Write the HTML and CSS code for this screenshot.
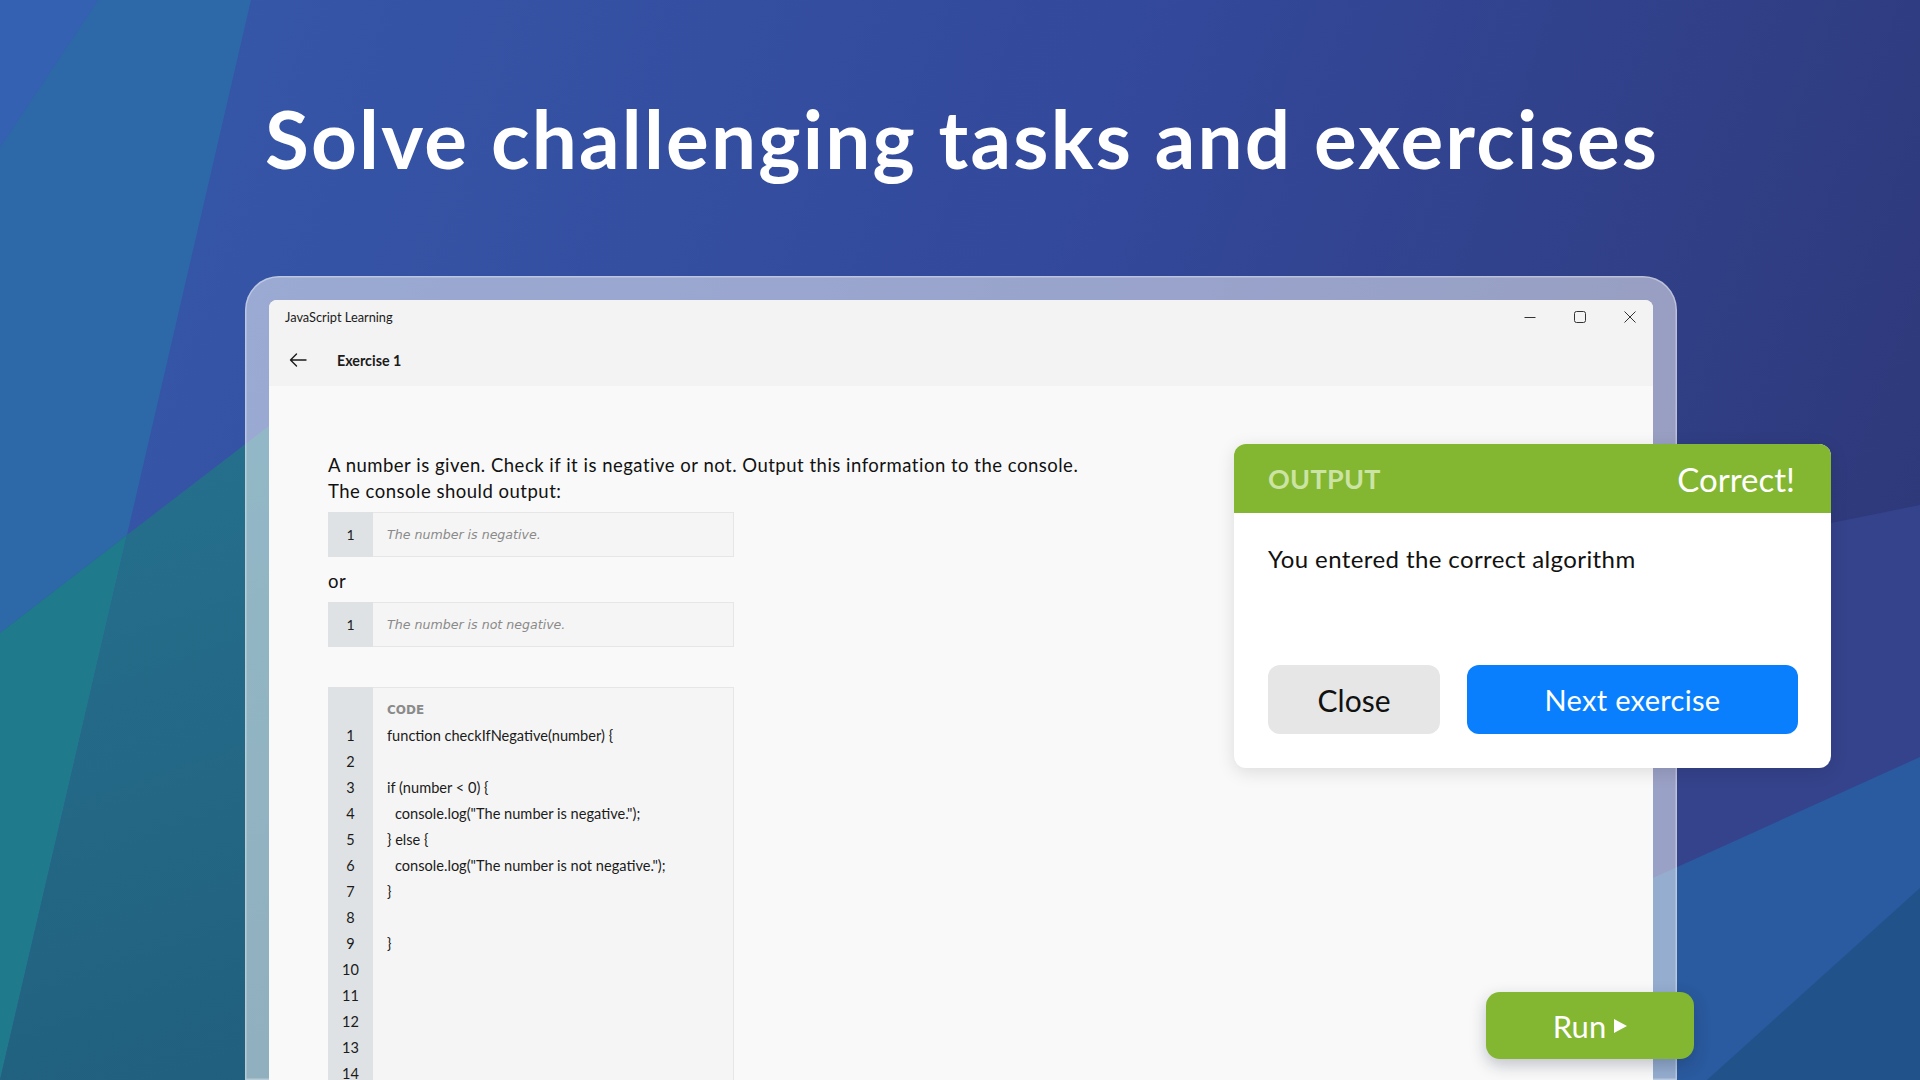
FILE: index.html
```html
<!DOCTYPE html>
<html lang="en">
<head>
<meta charset="utf-8">
<title>JavaScript Learning</title>
<link rel="stylesheet" href="styles.css">
</head>
<body>
<svg class="bg" viewBox="0 0 1920 1080" preserveAspectRatio="none" aria-hidden="true">
  <defs>
    <linearGradient id="base" x1="0" y1="0" x2="1920" y2="700" gradientUnits="userSpaceOnUse">
      <stop offset="0" stop-color="#3659aa"/>
      <stop offset="0.55" stop-color="#33489a"/>
      <stop offset="1" stop-color="#2e3878"/>
    </linearGradient>
    <linearGradient id="tealdark" x1="100" y1="500" x2="300" y2="1080" gradientUnits="userSpaceOnUse">
      <stop offset="0" stop-color="#256f8c"/>
      <stop offset="1" stop-color="#215f7e"/>
    </linearGradient>
  </defs>
  <rect x="0" y="0" width="1920" height="1080" fill="url(#base)"/>
  <polygon points="0,0 98,0 0,147" fill="#3461b1"/>
  <polygon points="98,0 251,0 127,535 0,633 0,147" fill="#2d69a8"/>
  <polygon points="0,633 127,535 0,1080" fill="#1f7b8b"/>
  <polygon points="127,535 420,310 420,1080 0,1080" fill="url(#tealdark)"/>
  <polygon points="1500,590 1920,505 1920,1080 1500,1080" fill="#35438c"/>
  <polygon points="1560,920 1920,757 1920,1080 1560,1080" fill="#2a5a9f"/>
  <polygon points="1707,1080 1920,888 1920,1080" fill="#21538a"/>
</svg>

<h1 class="headline">Solve challenging tasks and exercises</h1>

<div class="frame">
  <div class="window">
    <div class="titlebar">
      <div class="caption">
        <span class="app-title">JavaScript Learning</span>
        <div class="controls">
          <span class="ctl"><svg width="12" height="12" viewBox="0 0 12 12"><path d="M0.5 6.5H11.5" stroke="#333" stroke-width="1"/></svg></span>
          <span class="ctl"><svg width="12" height="12" viewBox="0 0 12 12"><rect x="0.5" y="0.5" width="11" height="11" rx="2" fill="none" stroke="#333" stroke-width="1"/></svg></span>
          <span class="ctl"><svg width="12" height="12" viewBox="0 0 12 12"><path d="M0.5 0.5L11.5 11.5M11.5 0.5L0.5 11.5" stroke="#333" stroke-width="1"/></svg></span>
        </div>
      </div>
      <div class="navbar">
        <svg class="back" width="18" height="14" viewBox="0 0 18 14"><path d="M17 7H1.5M7.5 1L1.5 7L7.5 13" fill="none" stroke="#1b1b1b" stroke-width="1.4" stroke-linecap="round" stroke-linejoin="round"/></svg>
        <span class="page-title">Exercise 1</span>
      </div>
    </div>

    <div class="content">
      <p class="task">A number is given. Check if it is negative or not. Output this information to the console.<br>The console should output:</p>
      <div class="snippet">
        <div class="gutter">1</div>
        <div class="snip-text">The number is negative.</div>
      </div>
      <p class="or">or</p>
      <div class="snippet">
        <div class="gutter">1</div>
        <div class="snip-text">The number is not negative.</div>
      </div>

      <div class="code">
        <div class="code-gutter">
          <span>&nbsp;</span><span>1</span><span>2</span><span>3</span><span>4</span><span>5</span><span>6</span><span>7</span><span>8</span><span>9</span><span>10</span><span>11</span><span>12</span><span>13</span><span>14</span>
        </div>
        <div class="code-lines">
          <span class="code-label">CODE</span>
          <span>function checkIfNegative(number) {</span>
          <span>&nbsp;</span>
          <span>if (number &lt; 0) {</span>
          <span class="ind">console.log("The number is negative.");</span>
          <span>} else {</span>
          <span class="ind">console.log("The number is not negative.");</span>
          <span>}</span>
          <span>&nbsp;</span>
          <span>}</span>
        </div>
      </div>
    </div>
  </div>
</div>

<div class="dialog">
  <div class="dialog-head">
    <span class="dh-label">OUTPUT</span>
    <span class="dh-status">Correct!</span>
  </div>
  <div class="dialog-body">
    <p class="dialog-msg">You entered the correct algorithm</p>
    <div class="dialog-actions">
      <button class="btn btn-close">Close</button>
      <button class="btn btn-next">Next exercise</button>
    </div>
  </div>
</div>

<button class="run">Run <span class="tri"></span></button>
</body>
</html>
```

FILE: styles.css
```css
* { box-sizing: border-box; }

html, body {
  margin: 0;
  padding: 0;
}

body {
  width: 1920px;
  height: 1080px;
  overflow: hidden;
  position: relative;
  font-family: Lato, "Liberation Sans", sans-serif;
  color: #1b1b1b;
}

.bg {
  position: absolute;
  left: 0;
  top: 0;
  width: 1920px;
  height: 1080px;
  z-index: -1;
}

.headline {
  margin: 0;
  padding: 90px 0 0 265px;
  height: 276px;
  font-family: Lato, "Liberation Sans", sans-serif;
  font-weight: 700;
  font-size: 80px;
  line-height: 96px;
  color: #ffffff;
  letter-spacing: 2.2px;
}

.frame {
  margin-left: 245px;
  width: 1432px;
  height: 804px;
  padding: 24px 24px 0 24px;
  border-radius: 34px 34px 0 0;
  background: rgba(255, 255, 255, 0.5);
  box-shadow: inset 0 0 0 1.5px rgba(255, 255, 255, 0.35);
}

.window {
  height: 100%;
  background: #f9f9f9;
  border-radius: 8px 8px 0 0;
  overflow: hidden;
}

.titlebar {
  background: #f3f3f3;
  height: 86px;
}

.caption {
  height: 34px;
  display: flex;
  align-items: center;
  justify-content: space-between;
  padding-left: 16px;
}

.app-title {
  font-family: Lato, "Liberation Sans", sans-serif;
  font-size: 12.8px;
  color: #1b1b1b;
}

.controls {
  display: flex;
  height: 34px;
  margin-right: -2px;
}

.ctl {
  width: 50px;
  display: flex;
  align-items: center;
  justify-content: center;
}

.navbar {
  height: 52px;
  display: flex;
  align-items: center;
  padding-left: 20px;
}

.back {
  display: block;
}

.page-title {
  margin-left: 30px;
  font-size: 14.3px;
  font-weight: 700;
  color: #1b1b1b;
}

.content {
  padding: 66px 0 0 59px;
}

.task {
  margin: 0;
  font-size: 18.5px;
  line-height: 26px;
  letter-spacing: 0.5px;
  color: #111;
}

.snippet {
  margin-top: 8px;
  width: 406px;
  height: 45px;
  display: flex;
  border: 1px solid #e6e6e6;
  background: #f5f5f5;
}

.gutter {
  width: 45px;
  background: #dfe2e4;
  display: flex;
  align-items: center;
  justify-content: center;
  font-size: 14px;
  color: #222;
  margin: -1px 0 -1px -1px;
}

.snip-text {
  display: flex;
  align-items: center;
  padding-left: 14px;
  font-family: "DejaVu Sans", sans-serif;
  font-style: italic;
  font-size: 12.6px;
  color: #8a8a8a;
}

.or {
  margin: 11px 0 0 0;
  font-size: 18.5px;
  line-height: 26px;
  letter-spacing: 0.5px;
  color: #111;
}

.code {
  margin-top: 40px;
  width: 406px;
  display: flex;
  border: 1px solid #e6e6e6;
  background: #f5f5f5;
}

.code-gutter {
  width: 45px;
  margin: -1px 0 0 -1px;
  background: #dfe2e4;
  padding-top: 10px;
  display: flex;
  flex-direction: column;
  align-items: center;
}

.code-gutter span,
.code-lines span {
  display: block;
  height: 26px;
  line-height: 26px;
  font-size: 14.6px;
  color: #1b1b1b;
}

.code-gutter span {
  font-size: 14.5px;
}

.code-lines {
  padding: 9px 0 0 14px;
  display: flex;
  flex-direction: column;
}

.code-lines .code-label {
  font-family: "DejaVu Sans", sans-serif;
  font-size: 12px;
  font-weight: 700;
  color: #8a8a8a;
}

.code-lines .ind {
  padding-left: 8px;
}

.dialog {
  position: absolute;
  left: 1234px;
  top: 444px;
  width: 597px;
  height: 324px;
  background: #ffffff;
  border-radius: 12px;
  overflow: hidden;
  box-shadow: 0 4px 18px rgba(0, 0, 0, 0.12);
}

.dialog-head {
  height: 69px;
  background: #83b631;
  display: flex;
  align-items: center;
  justify-content: space-between;
  padding: 0 36px 0 34px;
}

.dh-label {
  font-size: 27px;
  font-weight: 700;
  color: #cbe3a3;
  letter-spacing: 0.3px;
}

.dh-status {
  font-size: 33px;
  color: #ffffff;
}

.dialog-body {
  padding: 31px 33px 0 34px;
}

.dialog-msg {
  margin: 0;
  font-size: 24px;
  line-height: 30px;
  letter-spacing: 0.4px;
  color: #111;
}

.dialog-actions {
  margin-top: 91px;
  display: flex;
  gap: 27px;
}

.btn {
  border: none;
  height: 69px;
  border-radius: 12px;
  font-family: Lato, "Liberation Sans", sans-serif;
  padding: 0;
}

.btn-close {
  width: 172px;
  background: #e6e6e6;
  color: #111;
  font-size: 30px;
}

.btn-next {
  width: 331px;
  background: #0a7ffd;
  color: #ffffff;
  font-size: 29px;
  letter-spacing: 0.3px;
}

.run {
  position: absolute;
  left: 1486px;
  top: 992px;
  width: 208px;
  height: 67px;
  border: none;
  border-radius: 14px;
  background: #83b631;
  color: #ffffff;
  font-family: Lato, "Liberation Sans", sans-serif;
  font-size: 31px;
  display: flex;
  align-items: center;
  justify-content: center;
  gap: 8px;
  box-shadow: 0 6px 16px rgba(20, 30, 60, 0.25);
  padding: 0;
}

.tri {
  width: 0;
  height: 0;
  border-top: 7px solid transparent;
  border-bottom: 7px solid transparent;
  border-left: 13px solid #ffffff;
}
```
